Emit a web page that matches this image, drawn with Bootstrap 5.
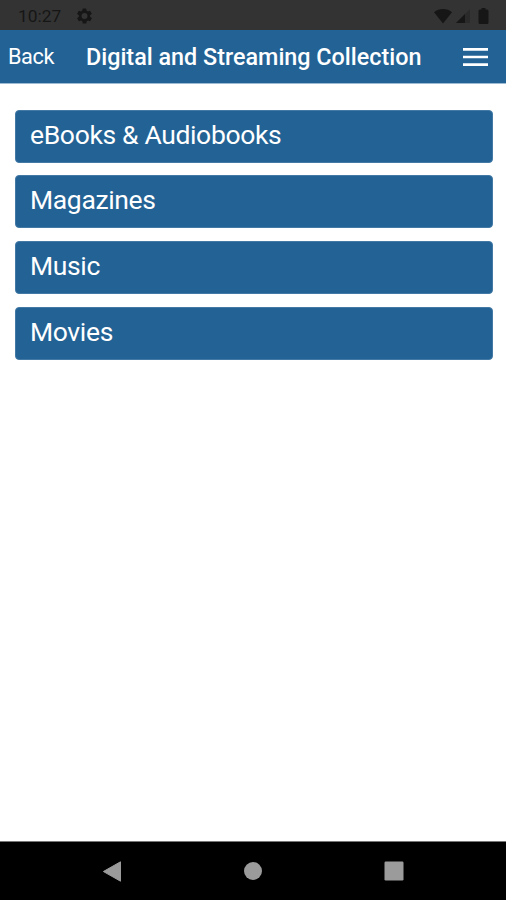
<!DOCTYPE html>
<html lang="en">
<head>
<meta charset="utf-8">
<meta name="viewport" content="width=device-width, initial-scale=1">
<title>Digital and Streaming Collection</title>
<link href="https://cdn.jsdelivr.net/npm/bootstrap@5.3.0/dist/css/bootstrap.min.css" rel="stylesheet">
<style>
body { font-family: Roboto, "Noto Sans", sans-serif; }
.status-bar { height: 30px; background: #333; color: #161616; padding: 2px 17px 0 18px; font-size: 17.4px; line-height: 28px; }
.status-time { width: 43px; }
.app-bar { height: 54px; background: #226295; border-bottom: 1px solid #9dbbd3; padding: 0 18px 0 8px; }
.back-link { font-size: 21.700px; line-height: 24px; letter-spacing: -.4px; width: 78px; }
.app-title { font-size: 23.350px; line-height: 27px; font-weight: 500; padding-top: 1px; }
.menu-btn { line-height: 0; }
.menu-list { padding: 25.7px 13.5px 0 15px; gap: 12.7px; }
.menu-tile { height: 53px; background: #226295; border: 1px solid #4279a5; border-radius: 4px; padding: 0 14px; font-size: 26.500px; letter-spacing: -.35px; line-height: 48.400px; }
.nav-keys { height: 59px; background: #000; border-top: 1px solid #777; color: #9b9b9b; padding: 0 102px; }
</style>
<script src="https://cdn.jsdelivr.net/npm/bootstrap@5.3.0/dist/js/bootstrap.bundle.min.js"></script>
</head>
<body class="bg-white">
<div class="d-flex flex-column vh-100 overflow-hidden">
  <div class="status-bar d-flex align-items-center justify-content-between flex-shrink-0">
    <div class="d-flex align-items-center">
      <span class="status-time">10:27</span>
      <svg class="ms-3" width="15" height="16" viewBox="2 2 20 20" fill="currentColor" aria-hidden="true"><path fill-rule="evenodd" d="M19.4 13a7.500 7.500 0 0 0 0-2l2.100-1.600a.5.5 0 0 0 .1-.6l-2-3.500a.5.5 0 0 0-.6-.2l-2.500 1a7.300 7.300 0 0 0-1.700-1l-.4-2.600a.5.5 0 0 0-.5-.5h-4a.5.5 0 0 0-.5.500l-.4 2.600c-.6.2-1.200.6-1.700 1l-2.500-1a.5.5 0 0 0-.6.200l-2 3.500a.5.5 0 0 0 .1.600L4.500 11a8 8 0 0 0 0 2l-2.100 1.600a.5.5 0 0 0-.1.600l2 3.500c.1.200.4.300.6.200l2.500-1c.5.400 1.100.800 1.700 1l.4 2.600c0 .3.200.5.500.5h4c.3 0 .5-.2.500-.5l.4-2.600c.6-.2 1.200-.6 1.700-1l2.500 1c.2.100.5 0 .6-.2l2-3.500a.5.5 0 0 0-.1-.6zM12 16a4 4 0 1 1 0-8 4 4 0 0 1 0 8z"/></svg>
    </div>
    <div class="d-flex align-items-center">
      <svg width="18" height="15" viewBox="0 0 18 15" fill="currentColor" aria-hidden="true"><path d="M0 3.200C5-1 13-1 18 3.200L9 14.500z"/></svg>
      <svg class="ms-1" width="14" height="14" viewBox="0 0 14 14" fill="currentColor" aria-hidden="true"><path d="M14 0v14H0z" opacity=".3"/><path d="M9 5v9H0z"/></svg>
      <svg class="ms-2" width="11" height="16" viewBox="0 0 11 16" fill="currentColor" aria-hidden="true"><path d="M3.500 0h4v1.600H9a1.500 1.500 0 0 1 1.500 1.500v11.400A1.500 1.500 0 0 1 9 16H2a1.500 1.500 0 0 1-1.500-1.500V3.100A1.500 1.500 0 0 1 2 1.600h1.500z"/></svg>
    </div>
  </div>
  <header class="app-bar d-flex align-items-center flex-shrink-0 text-white text-nowrap">
    <a class="back-link text-white text-decoration-none flex-shrink-0" href="#">Back</a>
    <h1 class="app-title m-0">Digital and Streaming Collection</h1>
    <button class="menu-btn btn p-0 border-0 text-white ms-auto" type="button" aria-label="Menu">
      <svg width="25" height="18" viewBox="0 0 25 18" fill="currentColor"><path d="M0 0h25v2.700H0zM0 7.650h25v2.700H0zM0 15.300h25V18H0z"/></svg>
    </button>
  </header>
  <main class="menu-list d-flex flex-column flex-grow-1">
    <a class="menu-tile d-block text-white text-decoration-none" href="#">eBooks &amp; Audiobooks</a>
    <a class="menu-tile d-block text-white text-decoration-none" href="#">Magazines</a>
    <a class="menu-tile d-block text-white text-decoration-none" href="#">Music</a>
    <a class="menu-tile d-block text-white text-decoration-none" href="#">Movies</a>
  </main>
  <footer class="nav-keys d-flex align-items-center justify-content-between flex-shrink-0">
    <svg width="20" height="21" viewBox="0 0 20 21" fill="currentColor" aria-hidden="true"><path d="M1.400 10.500 18.500.8v19.400z" stroke="currentColor" stroke-linejoin="round"/></svg>
    <svg width="18" height="18" viewBox="0 0 18 18" fill="currentColor" aria-hidden="true"><circle cx="9" cy="9" r="9"/></svg>
    <svg width="20" height="20" viewBox="0 0 20 20" fill="currentColor" aria-hidden="true"><rect x=".5" y=".5" width="19" height="19" rx="1.200"/></svg>
  </footer>
</div>
</body>
</html>
